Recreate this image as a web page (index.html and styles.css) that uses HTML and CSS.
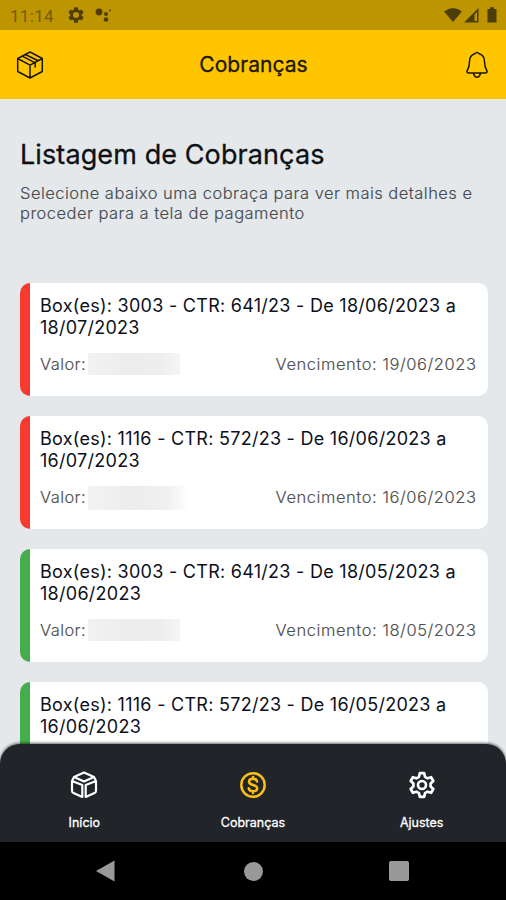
FILE: index.html
```html
<!DOCTYPE html>
<html lang="pt-BR">
<head>
<meta charset="utf-8">
<title>Cobranças</title>
<link rel="stylesheet" href="styles.css">
</head>
<body>
<div class="screen">
  <div class="status">
    <span class="clock">11:14</span>
    <svg class="status-gear" width="16" height="16" viewBox="2 2 20 20"><path fill="currentColor" fill-rule="evenodd" d="M19.14 12.94a7 7 0 0 0 0-1.88l2.03-1.58a.5.5 0 0 0 .12-.61l-1.92-3.32a.5.5 0 0 0-.59-.22l-2.39.96a7 7 0 0 0-1.62-.94l-.36-2.54a.5.5 0 0 0-.48-.41h-3.84a.5.5 0 0 0-.47.41l-.36 2.54a7 7 0 0 0-1.62.94l-2.39-.96a.5.5 0 0 0-.59.22L2.74 8.87a.5.5 0 0 0 .12.61l2.03 1.58a7 7 0 0 0 0 1.88l-2.03 1.58a.5.5 0 0 0-.12.61l1.92 3.32c.12.22.37.29.59.22l2.39-.96c.5.38 1.03.7 1.62.94l.36 2.54c.05.24.24.41.48.41h3.84c.24 0 .44-.17.47-.41l.36-2.54a7 7 0 0 0 1.62-.94l2.39.96c.22.08.47 0 .59-.22l1.92-3.32a.5.5 0 0 0-.12-.61zM12 15.8a3.800 3.800 0 1 1 0-7.600 3.800 3.800 0 0 1 0 7.600z"/></svg>
    <svg class="status-dots" width="18" height="16" viewBox="0 0 18 16"><g fill="currentColor"><circle cx="5" cy="5" r="3.400"/><circle cx="12" cy="7" r="2"/><circle cx="12" cy="12.500" r="2.300"/><circle cx="16" cy="3.500" r="1"/></g></svg>
    <svg class="status-system" width="56" height="18" viewBox="0 0 56 18"><g fill="currentColor"><path d="M0 5.500Q9-1.500 18 5.500L9 16z"/><path fill-rule="evenodd" d="M20 16.500 34.500 2v14.500zM30.500 8.500v6.500h2.500V6z"/><path d="M43.500 3H46V1.200h4V3h2.500v13.500h-9z"/></g></svg>
  </div>
  <header class="topbar">
    <svg width="28" height="28" viewBox="0 0 28 28" fill="none" stroke="currentColor" stroke-width="1.500" stroke-linejoin="round" stroke-linecap="round"><path d="M14 1 26.300 7.500v13L14 27 1.700 20.500v-13zM1.700 7.500 14 14.200l12.300-6.700M14 14.200V27M6.200 5.200l13 6.600M9.300 3.500l13 6.200M19.200 11.800v4.200"/></svg>
    <h1 class="topbar-title">Cobranças</h1>
    <svg width="24" height="28" viewBox="0 0 24 28" fill="none" stroke="currentColor" stroke-width="1.500" stroke-linejoin="round" stroke-linecap="round"><path d="M9.700 2.800Q12 .2 14.300 2.800C18.200 4 19.500 7 19.500 10.500c0 5 .6 6.500 2.300 9 .8 1.300 0 2.500-1.500 2.500H3.700c-1.500 0-2.300-1.200-1.500-2.500 1.700-2.500 2.300-4 2.300-9 0-3.500 1.300-6.500 5.200-7.700zM8.500 22.500q1 3.700 3.500 3.700t3.500-3.700"/></svg>
  </header>
  <main class="content">
    <h2 class="heading">Listagem de Cobranças</h2>
    <p class="intro">Selecione abaixo uma cobraça para ver mais detalhes e<br>proceder para a tela de pagamento</p>
    <div class="list">
      <article class="card overdue">
        <h3 class="card-title">Box(es): 3003 - CTR: 641/23 - De 18/06/2023 a<br>18/07/2023</h3>
        <div class="card-row"><span class="value">Valor:<i class="redacted"></i></span><span>Vencimento: 19/06/2023</span></div>
      </article>
      <article class="card overdue">
        <h3 class="card-title">Box(es): 1116 - CTR: 572/23 - De 16/06/2023 a<br>16/07/2023</h3>
        <div class="card-row"><span class="value">Valor:<i class="redacted wide"></i></span><span>Vencimento: 16/06/2023</span></div>
      </article>
      <article class="card paid">
        <h3 class="card-title">Box(es): 3003 - CTR: 641/23 - De 18/05/2023 a<br>18/06/2023</h3>
        <div class="card-row"><span class="value">Valor:<i class="redacted"></i></span><span>Vencimento: 18/05/2023</span></div>
      </article>
      <article class="card paid">
        <h3 class="card-title">Box(es): 1116 - CTR: 572/23 - De 16/05/2023 a<br>16/06/2023</h3>
      </article>
    </div>
  </main>
  <nav class="tabs">
    <a class="tab">
      <svg width="28" height="28" viewBox="0 0 28 28" fill="none" stroke="currentColor" stroke-width="2.200" stroke-linejoin="round"><path d="M14 1.500 24 6 14 10.500 4 6zM2 10l10.300 4v12L3.500 22Q2 21.300 2 19.800zM26 10l-10.300 4v12l8.800-4q1.500-.7 1.500-2.200zM4 6 2 10M24 6l2 4"/></svg>
      <span>Início</span>
    </a>
    <a class="tab active">
      <svg width="28" height="28" viewBox="0 0 28 28" fill="none" stroke="currentColor" stroke-width="2.500" stroke-linecap="round"><circle cx="14" cy="14" r="11.700"/><path d="M18 10.500c-.3-1.700-1.800-2.700-4-2.700-2.400 0-4 1.100-4 3 0 4.200 8.200 2.200 8.200 6.400 0 1.900-1.700 3-4.200 3-2.400 0-4-1.100-4.300-2.900M14 6v2M14 20v2"/></svg>
      <span>Cobranças</span>
    </a>
    <a class="tab">
      <svg width="28" height="28" viewBox="0 0 28 28" fill="none" stroke="currentColor" stroke-width="2.700" stroke-linejoin="round"><circle cx="14" cy="14" r="4"/><path d="M11.800 2.200h4.400l.8 3.600 2.600 1.500 3.500-1.100 2.200 3.800-2.700 2.500v3l2.700 2.500-2.200 3.800-3.500-1.100-2.600 1.500-.8 3.600h-4.400l-.8-3.600-2.600-1.500-3.500 1.100L2.700 18l2.700-2.500v-3L2.700 10l2.200-3.800 3.500 1.100L11 5.800z"/></svg>
      <span>Ajustes</span>
    </a>
  </nav>
  <div class="sysbar">
    <svg width="19" height="22" viewBox="0 0 19 22"><path fill="currentColor" d="M0 11 18.500.5v21z"/></svg>
    <i class="home"></i>
    <i class="recent"></i>
  </div>
</div>
</body>
</html>
```

FILE: styles.css
```css
* { box-sizing: border-box; margin: 0; }
body { font-family: Inter, "Liberation Sans", sans-serif; background: #000; }
svg { display: block; flex: none; }
.screen { display: flex; flex-direction: column; width: 506px; height: 900px; overflow: hidden; }

.status { display: flex; align-items: center; height: 30px; flex: none; padding: 0 9px 0 10px; background: #bd9500; color: #4d3e08; }
.clock { width: 58px; font: 400 17px/30px Roboto, sans-serif; letter-spacing: .3px; color: #735b06; padding-top: 2px; }
.status-dots { margin-left: 10px; }
.status-system { margin-left: auto; margin-right: -3px; }

.topbar { display: flex; align-items: center; justify-content: space-between; height: 69px; flex: none; padding: 0 17px 0 16px; background: #ffc600; color: #1b1705; }
.topbar-title { font-size: 21px; font-weight: 400; line-height: 28px; letter-spacing: .05px; padding-right: 2px; -webkit-text-stroke: .3px currentColor; }

.content { flex: 1; min-height: 0; overflow: hidden; padding: 39px 18.500px 0 20px; background: #e4e8eb; color: #0e1114; }
.heading { font-size: 27px; font-weight: 400; line-height: 34px; letter-spacing: .1px; white-space: nowrap; -webkit-text-stroke: .3px currentColor; }
.intro { margin-top: 10.500px; font-size: 16.500px; font-weight: 350; line-height: 20.500px; letter-spacing: .47px; color: #464b4f; white-space: nowrap; -webkit-text-stroke: .15px currentColor; }
.list { display: grid; gap: 20px; margin-top: 59.400px; }
.card { height: 113px; padding: 12px 11px 0 10px; border-left: 10px solid; border-radius: 10px; background: #fff; }
.overdue { border-color: #f73b30; }
.paid { border-color: #45ad4b; }
.card-title { font-size: 18px; font-weight: 400; line-height: 22px; letter-spacing: .27px; color: #0c1020; white-space: nowrap; }
.card-row { display: flex; justify-content: space-between; margin-top: 14px; font-size: 16.500px; font-weight: 350; line-height: 22px; letter-spacing: .56px; color: #505050; -webkit-text-stroke: .15px currentColor; }
.value { display: flex; gap: 2px; letter-spacing: .4px; }
.redacted { width: 92px; height: 22px; background: linear-gradient(90deg, #f2f2f2, #ececec 45%, #eee 80%, #f6f6f6); }
.wide { width: 100px; height: 24px; background: linear-gradient(90deg, #f3f3f3, #ececec 45%, #f0f0f0 80%, #fff); }

.tabs { position: relative; display: grid; grid-template-columns: repeat(3, 1fr); height: 98px; flex: none; margin-top: -20px; padding: 27px 0 0 0; border-radius: 20px 20px 0 0; background: #212529; color: #fff; box-shadow: 0 -1px 3px rgba(0, 0, 0, .6); }
.tab { display: flex; flex-direction: column; align-items: center; gap: 15px; font-size: 12.500px; font-weight: 400; line-height: 18px; -webkit-text-stroke: .3px currentColor; }
.active svg { color: #f9bd14; }

.sysbar { position: relative; display: flex; align-items: center; justify-content: space-between; height: 58px; flex: none; padding: 0 97px 0 96px; background: #000; color: #999; }
.home { width: 19px; height: 19px; margin-left: 2px; border-radius: 50%; background: #999; }
.recent { width: 20px; height: 20px; border-radius: 2px; background: #999; }
```
